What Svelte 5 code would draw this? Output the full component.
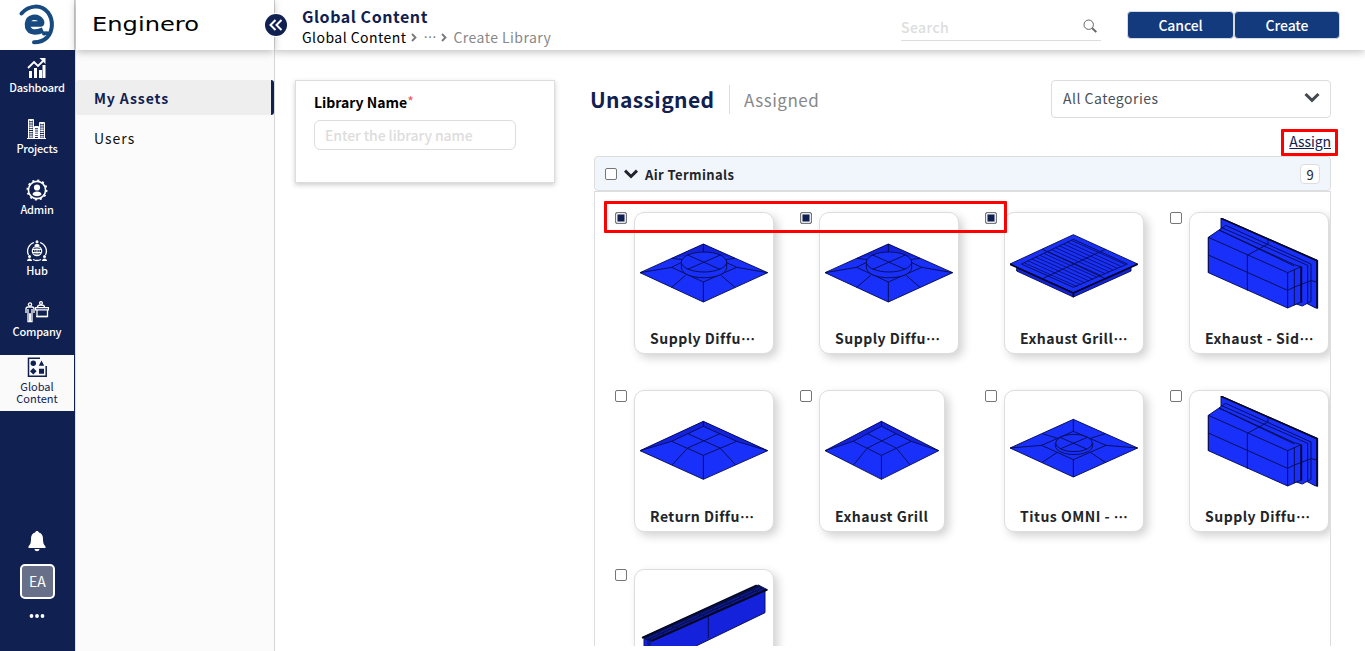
<script>
  const navItems = [
    { label: 'Dashboard', icon: 'chart' },
    { label: 'Projects', icon: 'buildings' },
    { label: 'Admin', icon: 'admin' },
    { label: 'Hub', icon: 'hub' },
    { label: 'Company', icon: 'company' },
  ];

  let products = $state([
    { name: 'Supply Diffu', cut: true, art: 'diffuser', checked: true },
    { name: 'Supply Diffu', cut: true, art: 'diffuser', checked: true },
    { name: 'Exhaust Grill', cut: true, art: 'grill', checked: true },
    { name: 'Exhaust - Sid', cut: true, art: 'side', checked: false },
    { name: 'Return Diffu', cut: true, art: 'pyramid', checked: false },
    { name: 'Exhaust Grill', art: 'pyramid', checked: false, narrow: true },
    { name: 'Titus OMNI - ', cut: true, art: 'omni', checked: false },
    { name: 'Supply Diffu', cut: true, art: 'side', checked: false },
    { name: '', art: 'linear', checked: false },
  ]);

  // louvres of the exhaust grill, from the top corner to the left one
  const slats = Array.from({ length: 13 }, (_, i) => {
    const t = (i + 0.5) / 13;
    return { x: 190 - 154 * t, y: 64 + 73 * t };
  });

  let libraryName = $state('');
  let search = $state('');
</script>

{#snippet navIcon(name)}
  {#if name === 'chart'}
    <svg width="22" height="22" viewBox="0 0 22 22" fill="#fff">
      <path d="M3 14h3v7H3zM8 11h3v10H8zM13 13h3v8h-3zM16.500 8h3v13h-3z" />
      <path d="M2 11 8 5l4 4 6-6" fill="none" stroke="#fff" stroke-width="1.800" />
      <path d="M13.500 1h6v6z" />
    </svg>
  {:else if name === 'buildings'}
    <svg width="22" height="22" viewBox="0 0 22 22" fill="none" stroke="#fff">
      <path d="M2.500 21V1.500h5V21M8.500 21V8.500h4V21M13.500 21V4.500h5V21M1 20.500h19" />
      <path d="M5 2v19M10.500 9v12M16 5v16" stroke-width="3.400" stroke-dasharray="1.300 .9" />
    </svg>
  {:else if name === 'admin'}
    <svg width="22" height="22" viewBox="0 0 22 22" fill="none" stroke="#fff">
      <circle cx="11" cy="11" r="8.600" stroke-width="1.600" />
      <circle cx="11" cy="11" r="9.700" stroke-width="1.600" stroke-dasharray="2.100 2.980" />
      <circle cx="11" cy="8.500" r="3.100" fill="#fff" stroke="none" />
      <path d="M6.500 15.500c0-4 9-4 9 0-2 2.200-7 2.200-9 0z" fill="#fff" stroke="none" />
    </svg>
  {:else if name === 'hub'}
    <svg width="22" height="22" viewBox="0 0 22 22" fill="none" stroke="#fff">
      <path d="M8 2.500a9 9 0 0 0-5.500 12.500M14 2.500a9 9 0 0 1 5.500 12.500M7 19.500a9 9 0 0 0 8 0" stroke-width="1.300" />
      <circle cx="11" cy="11" r="4.700" stroke-width="1.200" />
      <path d="M6.500 9.500h9M6.500 12.500h9M11 6.500v9" />
      <ellipse cx="11" cy="11" rx="2.200" ry="4.700" stroke-width=".7" />
      <g fill="#fff" stroke="none">
        <circle cx="11" cy="1.800" r="1.500" /><path d="M8.500 6c0-3 5-3 5 0z" />
        <circle cx="3.500" cy="16.500" r="1.500" /><path d="M1 21c0-3.500 5-3.500 5 0z" />
        <circle cx="18.500" cy="16.500" r="1.500" /><path d="M16 21c0-3.500 5-3.500 5 0z" />
      </g>
    </svg>
  {:else if name === 'company'}
    <svg width="24" height="22" viewBox="0 0 24 22" fill="none" stroke="#fff" stroke-width="1.300">
      <circle cx="5" cy="3.500" r="1.600" />
      <path d="M1 12V8q0-2 2-2h4q2 0 2 2v4M3 8v12.500h1.700V13h.6v7.500H7V8" />
      <circle cx="16" cy="2" r="1.400" />
      <path d="M12.500 6q0-2 3.500-2t3.500 2M10.500 6.600h13v2.200h-13zM12 9.500v6h10.500v-6" />
      <path d="M11 15.500h11" />
    </svg>
  {:else}
    <svg width="21" height="21" viewBox="0 0 21 21" fill="#102050">
      <path d="M13 1.300H1.500v18h17.700V9" fill="none" stroke="#102050" stroke-width="1.500" />
      <circle cx="6.300" cy="6.300" r="2.700" />
      <path d="M14.500 3.500l2.700 5.300h-5.400zM6.300 11l3.300 3.300-3.300 3.300L3 14.300zM12 11.800h5v5h-5z" />
    </svg>
  {/if}
{/snippet}

{#snippet picture(art)}
  <svg class="picture" viewBox="0 0 384 330" preserveAspectRatio="none">
    {#if art === 'diffuser'}
      <path class="face" d="M190 78 383 164 190 252 0 164z" />
      <path class="shade" d="M190 78 285 121 225 110 190 104 160 110 95 121z" />
      <path class="line" d="M190 78 383 164 190 252 0 164z" />
      <path class="line" d="M190 78v26M0 164l95-16 95 44 100-44 93 16M190 192v60M95 208l42-36M285 208l-42-36M95 121l35 4M285 121l-32 4M95 148l32-16M290 148l-34-16" />
      <path class="face line" d="M124 132v18c6 39 130 39 136 0v-18z" />
      <ellipse class="face line" cx="192" cy="132" rx="68" ry="30" />
      <path class="line" d="M143 111l97 43M241 111l-98 43" />
    {:else if art === 'omni'}
      <path class="face line" d="M190 70 383 156 190 243 0 156z" />
      <path class="line" d="M190 70v36M0 156l95-8 95 43 98-43 95 8M190 191v52M95 148l95-42 98 42M97 113l45 14M286 113l-45 14M97 199l45-30M286 199l-45-30" />
      <path class="face line" d="M136 142v8c5 34 107 34 112 0v-8z" />
      <ellipse class="face line" cx="192" cy="141" rx="55" ry="26" />
      <path class="line" d="M150 124l80 35M232 124l-82 35" />
    {:else if art === 'pyramid'}
      <path class="face" d="M190 76 383 164 190 250 0 164z" />
      <path class="shade" d="M190 76 383 164 290 136 190 91 95 136 0 164z" />
      <path class="line" d="M190 76 383 164 190 250 0 164z" />
      <path class="line" d="M190 76v15l100 45-100 42-95-42 95-45M0 164l95-28M383 164l-93-28M190 178v72M143 113l97 43 46 50M240 113l-97 43-46 50" />
    {:else if art === 'grill'}
      <path class="shade line" d="M20 145v14l170 78 173-78v-14L190 224z" />
      <path class="face line" d="M190 50 383 138 190 224 0 138z" />
      <path class="line heavy" d="M0 139l190 86 193-86M190 226v12" />
      <path class="line" d="M190 64 352 138 190 208 34 138z" />
      {#each slats as s}
        <path class="line thin" d="M{s.x} {s.y}l160 72" />
      {/each}
      <path class="line" d="M97 94l189 88M286 94L97 182" />
    {:else if art === 'side'}
      <path class="face line" d="M78 0 368 127v144l-8-2-62-32V140L78 38z" />
      <path class="line heavy" d="M78 1l288 127v143" />
      <path class="face line" d="M72 36l20-14 256 116v112l-26 14-24-8z" />
      <path class="face line" d="M40 58l32-22 226 104 20 6v106l-40 18L40 164z" />
      <path class="line" d="M40 58l238 106v106M40 111l238 106 20-10M157 112v106M157 112l62-34V62M72 36l226 108M78 28l260 114v112M278 164l40-18M298 154v108M40 58v106M298 207l50-19 20 4" />
      <path class="line heavy" d="M319 146v108" />
    {:else}
      <path class="shade" d="M12 192 375 45v68L40 275H12z" />
      <path class="line" d="M12 192v90M24 194v80M30 194v80M375 45v68L40 275M205 125v65" />
      <path class="line" fill="#07104f" d="M6 188 355 30l27 14L35 198z" />
      <path class="bar" d="M20 191 360 38M32 193 370 42" />
      <path class="line heavy" d="M35 198 382 44M6 188 350 31" />
    {/if}
  </svg>
{/snippet}

<div class="app">
  <aside class="rail">
    <div class="logo">
      <svg width="38" height="42" viewBox="0 0 38 42" fill="none" stroke="#174a80">
        <path d="M3.500 9.500C11 1 23 0 30 8.500c6 8 4.500 19-.5 24.500-3.500 3.600-8 5.300-13.500 5.300" stroke-width="4" stroke-linecap="round" />
        <path d="M26 29.500q4-1 5 1" stroke-width="4" stroke-linecap="round" />
        <path d="M10 20h12.500c1.500 0 1.500-2 .5-3.500-4-5.500-13-4-13.500 3.500-.2 8 7 10 15.500 6" stroke-width="5.500" />
      </svg>
    </div>
    <nav>
      {#each navItems as item}
        <a class="nav-item" href="#{item.icon}">
          {@render navIcon(item.icon)}
          <span>{item.label}</span>
        </a>
      {/each}
      <a class="nav-item active" href="#global">
        {@render navIcon('global')}
        <span>Global<br />Content</span>
      </a>
    </nav>
    <div class="rail-bottom">
      <svg width="18" height="21" viewBox="0 0 18 21" fill="#fff">
        <path d="M9 0c-1 0-1.700.6-1.900 1.500C4.300 2.300 3 4.500 3 7.500c0 5-1 6-2.500 8V17h17v-1.500C16 13.500 15 12.500 15 7.500c0-3-1.300-5.200-4.100-6C10.700.6 10 0 9 0zM6.500 18h5c-.3 3-4.700 3-5 0z" />
      </svg>
      <div class="avatar">EA</div>
      <svg width="16" height="4" viewBox="0 0 16 4" fill="#fff">
        <circle cx="2.500" cy="2" r="1.900" /><circle cx="8" cy="2" r="1.900" /><circle cx="13.500" cy="2" r="1.900" />
      </svg>
    </div>
  </aside>

  <div class="panel">
    <div class="brand">
      <svg width="108" height="26" viewBox="0 0 108 26">
        <text x="0" y="18" textLength="107" lengthAdjust="spacingAndGlyphs">Enginero</text>
      </svg>
    </div>
    <div class="menu">
      <a class="selected" href="#assets">My Assets</a>
      <a href="#users">Users</a>
    </div>
    <button class="collapse" aria-label="Collapse">
      <svg width="22" height="22" viewBox="0 0 22 22" fill="none" stroke="#fff" stroke-width="2">
        <path d="M10.500 6l-5 5 5 5M16.500 6l-5 5 5 5" />
      </svg>
    </button>
  </div>

  <main>
    <header>
      <div class="titles">
        <h1>Global Content</h1>
        <div class="crumbs">
          <span>Global Content</span>
          <svg width="6" height="9" viewBox="0 0 6 9"><path d="M1 1l3.500 3.500L1 8" /></svg>
          <span class="dots">…</span>
          <svg width="6" height="9" viewBox="0 0 6 9"><path d="M1 1l3.500 3.500L1 8" /></svg>
          <span class="current">Create Library</span>
        </div>
      </div>
      <div class="search">
        <input placeholder="Search" bind:value={search} />
        <svg width="15" height="15" viewBox="0 0 15 15" fill="none" stroke="#666">
          <circle cx="5.700" cy="5.700" r="4.700" />
          <path d="M9.300 9.300l4 3.800" stroke-width="2" />
        </svg>
      </div>
      <div class="actions">
        <button>Cancel</button>
        <button>Create</button>
      </div>
    </header>

    <div class="content">
      <section class="form">
        <label for="library">Library Name<sup>*</sup></label>
        <input id="library" placeholder="Enter the library name" bind:value={libraryName} />
      </section>

      <section class="assets">
        <div class="toolbar">
          <div class="tabs">
            <span class="tab on">Unassigned</span>
            <span class="tab">Assigned</span>
          </div>
          <div class="select">
            <span>All Categories</span>
            <svg width="16" height="11" viewBox="0 0 16 11" fill="none" stroke="#454950" stroke-width="3"><path d="M1.500 2 8 8.300 14.500 2" /></svg>
          </div>
        </div>
        <div class="assign-row"><a href="#assign">Assign<i class="mark"></i></a></div>

        <div class="group">
          <span class="box"></span>
          <svg width="14" height="10" viewBox="0 0 14 10" fill="none" stroke="#212529" stroke-width="3"><path d="M1 1.700 7 7.500l6-5.800" /></svg>
          <span class="group-name">Air Terminals</span>
          <span class="count">9</span>
        </div>
        <div class="list">
          <i class="mark"></i>
          {#each products as product}
            <div class="cell">
              <button class="box" class:checked={product.checked} aria-label="Select" onclick={() => (product.checked = !product.checked)}></button>
              <div class="card" class:narrow={product.narrow}>
                {@render picture(product.art)}
                {#if product.name}
                  <p><span>{product.name}</span>{#if product.cut}<span>…</span>{/if}</p>
                {/if}
              </div>
            </div>
          {/each}
        </div>
      </section>
    </div>
  </main>
</div>

<style>
  :global(body) {
    overflow: hidden;
  }

  .app {
    display: flex;
    width: 100%;
    height: 651px;
    overflow: hidden;
    background: #fff;
    color: #212529;
    font-family: "Noto Sans CJK JP", "Noto Sans", sans-serif;
    font-size: 14px;
    line-height: 20px;
  }

  .app * {
    box-sizing: border-box;
  }

  svg {
    display: block;
    flex: none;
  }

  a {
    color: inherit;
    text-decoration: none;
  }

  button,
  input {
    font: inherit;
    padding: 0;
  }

  /* left rail */
  .rail {
    display: flex;
    flex-direction: column;
    width: 75px;
    flex: none;
    background: #102050;
    color: #fff;
  }

  .logo {
    height: 50px;
    padding: 4px 0 0 18px;
    background: #fff;
    border-right: 1px solid #ccc;
  }

  .nav-item {
    display: flex;
    flex-direction: column;
    align-items: center;
    height: 61px;
    padding: 7px 1px 0 0;
    font-size: 11px;
    font-weight: 500;
    letter-spacing: -0.2px;
    line-height: 12px;
    text-align: center;
  }

  .nav-item span {
    margin-top: 2px;
  }

  .nav-item.active {
    width: 74px;
    height: 56px;
    padding: 2px 0 0;
    background: #fafafa;
    color: #102050;
    font-weight: 400;
    letter-spacing: 0;
  }

  .rail-bottom {
    display: flex;
    flex-direction: column;
    align-items: center;
    margin-top: auto;
    padding-bottom: 33px;
  }

  .rail-bottom svg {
    margin-right: 1px;
  }

  .avatar {
    width: 35px;
    height: 35px;
    margin: 12px 0 15px;
    border: 2px solid #fff;
    border-radius: 5px;
    background: #687089;
    text-align: center;
    line-height: 31px;
  }

  /* second column */
  .panel {
    position: relative;
    width: 200px;
    flex: none;
    background: #fbfbfb;
    border-left: 1px solid #ddd;
    border-right: 1px solid #d6d6d6;
  }

  .brand {
    height: 50px;
    padding: 13px 0 0 16px;
    background: #fff;
    box-shadow: 0 2px 8px rgba(0, 0, 0, 0.25);
  }

  .brand text {
    font: 19px "DejaVu Sans", sans-serif;
    fill: #000;
  }

  .menu {
    padding-top: 30px;
  }

  .menu a {
    display: block;
    height: 35px;
    margin-bottom: 5px;
    padding-left: 18px;
    color: #111;
    letter-spacing: 1px;
    line-height: 37px;
  }

  .menu .selected {
    background: #eee;
    border-right: 3px solid #102050;
    border-radius: 3px;
    color: #102050;
    font-weight: 700;
    letter-spacing: 0.9px;
  }

  .collapse {
    position: absolute;
    top: 14px;
    right: -13px;
    z-index: 3;
    width: 22px;
    height: 22px;
    border: 0;
    border-radius: 50%;
    background: #102050;
    box-shadow: 0 0 0 1px #fff;
  }

  main {
    flex: 1;
    min-width: 0;
  }

  header {
    display: flex;
    height: 50px;
    padding-left: 27px;
    box-shadow: 0 2px 8px rgba(0, 0, 0, 0.25);
  }

  .titles {
    width: 599px;
  }

  h1 {
    margin: 6px 0 0;
    color: #102050;
    font-size: 16px;
    font-weight: 700;
    letter-spacing: 0.55px;
    line-height: 20px;
  }

  .crumbs {
    display: flex;
    align-items: center;
    color: #000;
    letter-spacing: 0.45px;
    line-height: 22px;
  }

  .crumbs svg {
    margin: 1px 6px 0 5px;
    fill: none;
    stroke: #777;
    stroke-width: 1.8;
  }

  .crumbs .dots {
    width: 13px;
    color: #777;
    font-size: 13px;
    letter-spacing: 0;
  }

  .crumbs .current {
    color: #888;
  }

  .search {
    display: flex;
    align-items: center;
    width: 200px;
    height: 26px;
    margin-top: 15px;
    padding-right: 3px;
    border-bottom: 1px solid #ddd;
  }

  .search svg {
    margin-top: -3px;
  }

  input {
    min-width: 0;
    border: 0;
    background: none;
    outline: none;
  }

  .search input {
    flex: 1;
    margin-top: -1px;
    letter-spacing: 0.4px;
  }

  input::placeholder {
    color: #ddd;
    font-weight: 500;
    opacity: 1;
  }

  .actions {
    display: flex;
    margin: 11px 0 0 26px;
  }

  .actions button {
    width: 107px;
    height: 28px;
    border: 1px solid #d5d9e2;
    border-radius: 4px;
    background: #123a7c;
    color: #fff;
    font-weight: 500;
    letter-spacing: -0.1px;
  }

  .actions button + button {
    width: 106px;
  }

  .content {
    display: flex;
    align-items: flex-start;
    padding: 30px 34px 0 20px;
  }

  .form {
    width: 260px;
    height: 103px;
    padding: 11px 18px;
    border: 1px solid #ddd;
    box-shadow: 0 2px 5px rgba(0, 0, 0, 0.2);
  }

  .form label {
    display: block;
    color: #000;
    font-weight: 700;
    letter-spacing: 0;
  }

  sup {
    color: #e55;
    font-size: 14px;
    font-weight: 400;
    line-height: 0;
    vertical-align: 1px;
  }

  .form input {
    width: 202px;
    height: 30px;
    margin-top: 8px;
    padding: 0 10px;
    border: 1px solid #ddd;
    border-radius: 6px;
    letter-spacing: -0.1px;
  }

  .assets {
    width: 741px;
    margin-left: 35px;
  }

  .toolbar {
    display: flex;
    justify-content: space-between;
  }

  .tabs {
    display: flex;
    padding-top: 5px;
  }

  .tab {
    height: 29px;
    padding-left: 14px;
    color: #888;
    font-size: 17px;
    letter-spacing: 0.5px;
    line-height: 29px;
  }

  .tab.on {
    width: 140px;
    padding-left: 0;
    border-right: 1px solid #ddd;
    color: #102050;
    font-size: 21px;
    font-weight: 700;
    letter-spacing: 0.4px;
  }

  .select {
    display: flex;
    align-items: center;
    justify-content: space-between;
    width: 280px;
    height: 38px;
    padding: 0 10px 2px 11px;
    border: 1px solid #ddd;
    border-radius: 4px;
    color: #495057;
    letter-spacing: 0.5px;
  }

  .select svg {
    margin-top: -1px;
  }

  .assign-row {
    height: 38px;
    padding-top: 13px;
    text-align: right;
  }

  .assign-row a {
    position: relative;
    color: #102050;
    text-decoration: underline;
    letter-spacing: -0.1px;
  }

  .mark {
    position: absolute;
    z-index: 2;
    border: 3px solid #f00;
    border-radius: 1px;
    pointer-events: none;
  }

  .assign-row .mark {
    top: -2px;
    right: -7px;
    width: 57px;
    height: 27px;
  }

  .group {
    display: flex;
    align-items: center;
    height: 35px;
    margin-left: 4px;
    padding: 0 10px;
    border: 1px solid #ddd;
    border-radius: 4px;
    background: #f1f5fc;
  }

  .group svg {
    margin: 0 7px 0 7px;
  }

  .group-name {
    margin-top: 3px;
    font-size: 13px;
    font-weight: 700;
    letter-spacing: 0.4px;
  }

  .count {
    width: 20px;
    height: 20px;
    margin-left: auto;
    border: 1px solid #ddd;
    border-radius: 4px;
    background: #fff;
    font-size: 13px;
    line-height: 19px;
    text-align: center;
  }

  .box {
    width: 12px;
    height: 12px;
    flex: none;
    border: 1px solid #767676;
    border-radius: 2px;
    background: #fff;
  }

  .box.checked {
    background: #102050;
    box-shadow: inset 0 0 0 1.5px #e9e9ee;
  }

  .list {
    position: relative;
    display: grid;
    grid-template-columns: repeat(4, 185px);
    grid-auto-rows: 178.5px;
    height: 455px;
    margin-left: 4px;
    padding: 19.7px 0 0 20px;
    overflow: hidden;
    border: 1px solid #ddd;
    border-bottom: 0;
  }

  .list .mark {
    top: 9px;
    left: 9px;
    width: 403px;
    height: 32px;
  }

  .cell {
    display: flex;
    align-items: flex-start;
  }

  .card {
    width: 140px;
    height: 142px;
    margin-left: 7px;
    padding: 5px;
    border: 1px solid #ddd;
    border-radius: 10px;
    background: #fff;
    box-shadow: 4px 4px 10px rgba(0, 0, 0, 0.18);
  }

  .card.narrow {
    width: 126px;
  }

  .card p {
    display: flex;
    margin: 0;
    padding-left: 10px;
    font-weight: 700;
    letter-spacing: 0.5px;
    line-height: 20px;
    white-space: pre;
  }

  .picture {
    width: 100%;
    height: 110px;
  }

  .face {
    fill: #1930fa;
  }

  .shade {
    fill: #1522dc;
  }

  .line {
    stroke: #050d50;
    stroke-width: 2.8;
    stroke-linejoin: round;
  }

  .line:not(.face):not(.shade):not([fill]) {
    fill: none;
  }

  .line.thin {
    stroke-width: 2.4;
  }

  .line.heavy {
    stroke: #040720;
    stroke-width: 5;
  }

  .bar {
    fill: none;
    stroke: #1522dc;
    stroke-width: 2;
    stroke-dasharray: 40 4;
  }
</style>
